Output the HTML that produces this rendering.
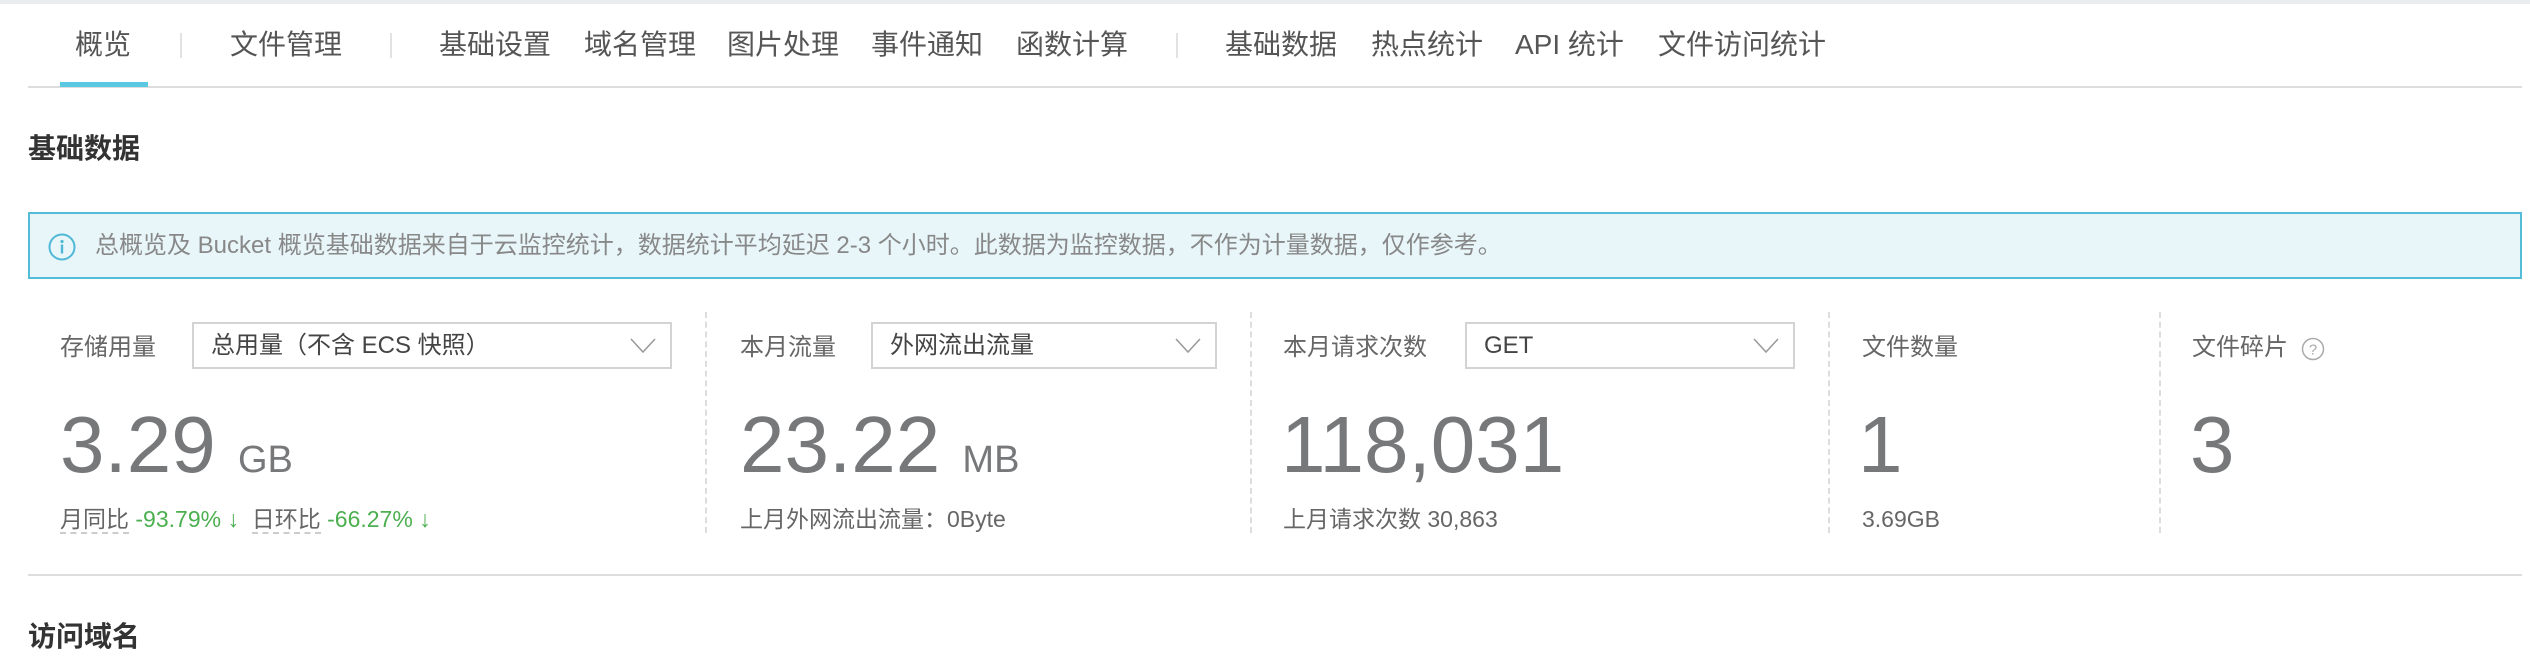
<!DOCTYPE html>
<html><head><meta charset="utf-8"><style>
*{margin:0;padding:0;box-sizing:border-box}
body{width:2530px;height:672px;background:#fff;position:relative;overflow:hidden;font-family:"Liberation Sans","Noto Sans CJK SC",sans-serif;color:#666}
.a{position:absolute;white-space:nowrap}
.tab{font-size:28px;color:#555;line-height:40px;top:25px}
.sep{position:absolute;top:33px;width:2px;height:25px;background:#e2e2e2}
.lbl{font-size:24px;color:#666;line-height:30px}
.sel{position:absolute;top:322px;height:47px;border:2px solid #d3d3d3;background:#fff}
.sel span{position:absolute;left:17px;top:7px;font-size:24px;color:#444;line-height:30px}
.sel svg{position:absolute;right:14px;top:14px}
.big{font-size:80px;color:#76787a;line-height:80px;top:405px}
.unit{font-size:38px}
.sub{font-size:23px;color:#666;line-height:30px;top:504px}
.vd{position:absolute;top:312px;height:221px;border-left:2px dashed #ddd}
.g{color:#4caf50}
</style></head><body>
<div class="a" style="left:0;top:0;width:2530px;height:4px;background:#ebeced"></div>
<div class="a tab" style="left:75px">概览</div>
<div class="sep" style="left:180px"></div>
<div class="a tab" style="left:230px">文件管理</div>
<div class="sep" style="left:390px"></div>
<div class="a tab" style="left:439px">基础设置</div>
<div class="a tab" style="left:584px">域名管理</div>
<div class="a tab" style="left:727px">图片处理</div>
<div class="a tab" style="left:871px">事件通知</div>
<div class="a tab" style="left:1016px">函数计算</div>
<div class="sep" style="left:1176px"></div>
<div class="a tab" style="left:1225px">基础数据</div>
<div class="a tab" style="left:1371px">热点统计</div>
<div class="a tab" style="left:1515px">API 统计</div>
<div class="a tab" style="left:1658px">文件访问统计</div>
<div class="a" style="left:28px;top:86px;width:2494px;height:2px;background:#ddd"></div>
<div class="a" style="left:60px;top:82px;width:88px;height:5px;background:#5ac8e2"></div>

<div class="a" style="left:28px;top:133px;font-size:28px;font-weight:bold;color:#333;line-height:32px">基础数据</div>

<div class="a" style="left:28px;top:212px;width:2494px;height:67px;border:2px solid #55bcd8;background:#e8f6fa"></div>
<svg class="a" style="left:48px;top:233px" width="28" height="28" viewBox="0 0 28 28"><circle cx="14" cy="14" r="12.5" fill="none" stroke="#4fb8d6" stroke-width="2"/><circle cx="14" cy="8.5" r="1.6" fill="#4fb8d6"/><rect x="12.8" y="11.5" width="2.4" height="9" fill="#4fb8d6"/></svg>
<div class="a" style="left:95px;top:231px;font-size:24px;color:#888;line-height:30px">总概览及 Bucket 概览基础数据来自于云监控统计，数据统计平均延迟 2-3 个小时。此数据为监控数据，不作为计量数据，仅作参考。</div>

<!-- card1 -->
<div class="a lbl" style="left:60px;top:333px">存储用量</div>
<div class="sel" style="left:192px;width:480px"><span>总用量（不含 ECS 快照）</span><svg width="26" height="16" viewBox="0 0 26 16"><path d="M1 1 L13 14 L25 1" fill="none" stroke="#999" stroke-width="1.5"/></svg></div>
<div class="a big" style="left:60px">3.29 <span class="unit">GB</span></div>
<div class="a sub" style="left:60px"><span style="border-bottom:2px dashed #ccc">月同比</span> <span class="g">-93.79%</span><span class="g" style="font-weight:bold"> ↓</span> &nbsp;<span style="border-bottom:2px dashed #ccc">日环比</span> <span class="g">-66.27%</span><span class="g" style="font-weight:bold"> ↓</span></div>
<div class="vd" style="left:705px"></div>

<!-- card2 -->
<div class="a lbl" style="left:740px;top:333px">本月流量</div>
<div class="sel" style="left:871px;width:346px"><span>外网流出流量</span><svg width="26" height="16" viewBox="0 0 26 16"><path d="M1 1 L13 14 L25 1" fill="none" stroke="#999" stroke-width="1.5"/></svg></div>
<div class="a big" style="left:740px">23.22 <span class="unit">MB</span></div>
<div class="a sub" style="left:740px">上月外网流出流量：0Byte</div>
<div class="vd" style="left:1250px"></div>

<!-- card3 -->
<div class="a lbl" style="left:1283px;top:333px">本月请求次数</div>
<div class="sel" style="left:1465px;width:330px"><span>GET</span><svg width="26" height="16" viewBox="0 0 26 16"><path d="M1 1 L13 14 L25 1" fill="none" stroke="#999" stroke-width="1.5"/></svg></div>
<div class="a big" style="left:1281px">118,031</div>
<div class="a sub" style="left:1283px">上月请求次数 30,863</div>
<div class="vd" style="left:1828px"></div>

<!-- card4 -->
<div class="a lbl" style="left:1862px;top:333px">文件数量</div>
<div class="a big" style="left:1858px">1</div>
<div class="a sub" style="left:1862px">3.69GB</div>
<div class="vd" style="left:2159px"></div>

<!-- card5 -->
<div class="a lbl" style="left:2192px;top:333px">文件碎片</div>
<svg class="a" style="left:2301px;top:337px" width="24" height="24" viewBox="0 0 24 24"><circle cx="12" cy="12" r="10.5" fill="none" stroke="#aaa" stroke-width="1.5"/><text x="12" y="17.5" font-size="15" text-anchor="middle" fill="#aaa" font-family="Liberation Sans">?</text></svg>
<div class="a big" style="left:2190px">3</div>

<div class="a" style="left:28px;top:574px;width:2494px;height:2px;background:#ddd"></div>
<div class="a" style="left:28px;top:621px;font-size:28px;font-weight:bold;color:#333;line-height:32px">访问域名</div>
</body></html>
